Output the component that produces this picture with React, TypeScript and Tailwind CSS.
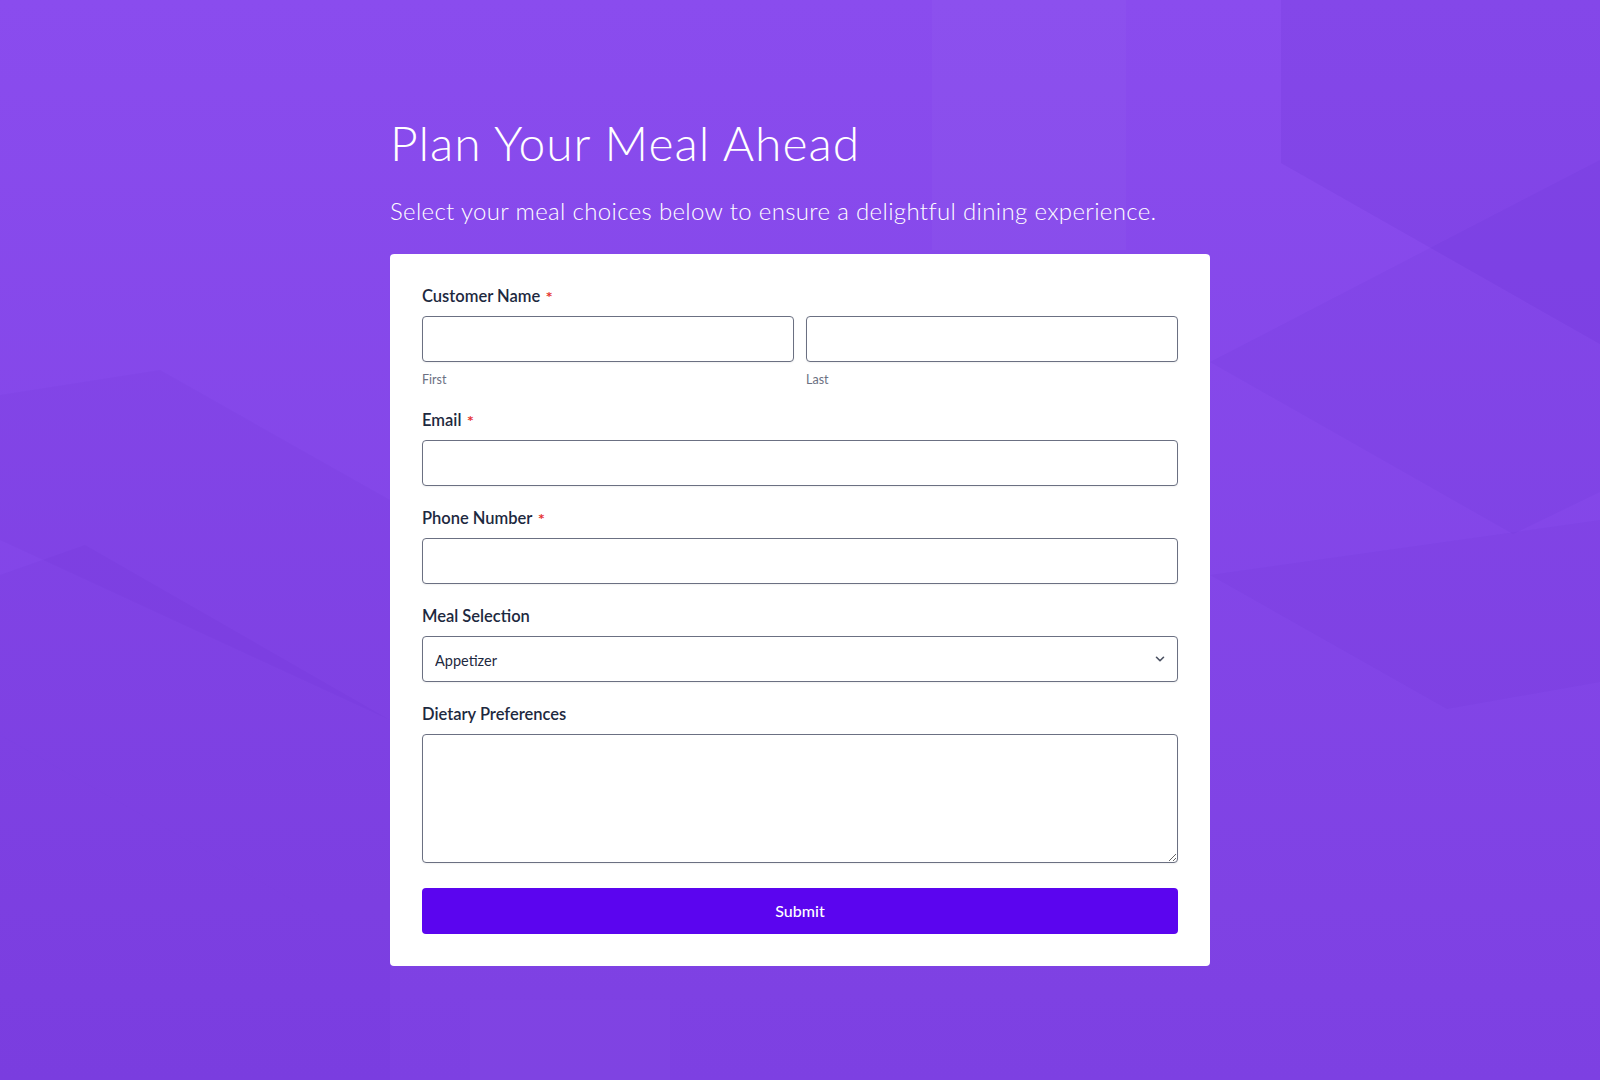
import { ChevronDown } from 'lucide-react';

function Label({ text, required }: { text: string; required?: boolean }) {
  return (
    <label className="mb-2 flex h-6 items-center text-[16.5px] font-semibold leading-6 text-[#1d2940]">
      {text}
      {required && (
        <span
          className="ml-[6px] translate-y-[1px] text-[11px] font-bold leading-none text-[#e5322d]"
          style={{ fontFamily: '"DejaVu Sans", sans-serif' }}
        >
          *
        </span>
      )}
    </label>
  );
}

const inputCls =
  'h-[46px] w-full rounded-[4px] border border-[#6b7082] bg-white px-3 text-[14.5px] text-[#1d2940] outline-none shadow-[0_1px_2px_rgba(0,0,0,0.06)]';

function Background() {
  return (
    <svg
      className="pointer-events-none absolute inset-0 h-full w-full"
      viewBox="0 0 1600 1080"
      preserveAspectRatio="none"
    >
      <polygon points="932,0 1126,0 1126,250 932,250" fill="#ffffff" opacity="0.025" />
      <polygon points="1281,0 1600,0 1600,344 1281,163" fill="#3b0aa8" opacity="0.07" />
      <polygon points="1210,362 1600,160 1600,492 1513,534" fill="#3b0aa8" opacity="0.04" />
      <polygon points="1210,575 1600,520 1600,682 1447,709" fill="#3b0aa8" opacity="0.035" />
      <polygon points="0,395 160,370 390,500 390,720 0,540" fill="#3b0aa8" opacity="0.03" />
      <polygon points="0,575 85,545 390,720 390,1080 320,1080 320,915 0,735" fill="#3b0aa8" opacity="0.035" />
      <polygon points="0,735 320,915 320,1080 0,1080" fill="#3b0aa8" opacity="0.045" />
      <polygon points="470,1000 670,1000 670,1080 470,1080" fill="#ffffff" opacity="0.015" />
    </svg>
  );
}

export default function App() {
  return (
    <div
      className="relative flex min-h-screen items-center justify-center overflow-hidden bg-gradient-to-b from-[#8a4cee] to-[#7d40e2]"
      style={{ fontFamily: 'Lato, "Noto Sans", sans-serif' }}
    >
      <Background />
      <div className="relative w-[820px]">
        <h1 className="text-[48px] font-light leading-[1.2] tracking-[1px] text-white">Plan Your Meal Ahead</h1>
        <p className="mt-[25px] text-2xl font-light leading-[1.2] tracking-[0.35px] text-white">
          Select your meal choices below to ensure a delightful dining experience.
        </p>

        <form className="mt-[28px] flex flex-col gap-5 rounded-[4px] bg-white px-8 pb-8 pt-[30px]">
          <div>
            <Label text="Customer Name" required />
            <div className="grid grid-cols-2 gap-3">
              <div>
                <input className={inputCls} />
                <div className="mt-[10px] text-[12.5px] leading-4 text-[#6b7082]">First</div>
              </div>
              <div>
                <input className={inputCls} />
                <div className="mt-[10px] text-[12.5px] leading-4 text-[#6b7082]">Last</div>
              </div>
            </div>
          </div>

          <div>
            <Label text="Email" required />
            <input className={inputCls} type="email" />
          </div>

          <div>
            <Label text="Phone Number" required />
            <input className={inputCls} type="tel" />
          </div>

          <div>
            <Label text="Meal Selection" />
            <div className="relative">
              <select className={inputCls + ' appearance-none pt-1'} defaultValue="Appetizer">
                <option>Appetizer</option>
                <option>Main Course</option>
                <option>Dessert</option>
              </select>
              <ChevronDown
                className="pointer-events-none absolute right-[11px] top-1/2 h-[14px] w-[14px] -translate-y-1/2 text-[#4b5162]"
                strokeWidth={2.75}
              />
            </div>
          </div>

          <div>
            <Label text="Dietary Preferences" />
            <textarea className="block h-[129px] w-full rounded-[4px] border border-[#6b7082] bg-white px-3 py-2 text-sm outline-none shadow-[0_1px_2px_rgba(0,0,0,0.06)]" />
          </div>

          <button
            type="button"
            className="mt-[5px] h-[46px] w-full rounded-[4px] bg-[#5b05ef] text-base font-medium text-white"
          >
            Submit
          </button>
        </form>
      </div>
    </div>
  );
}
